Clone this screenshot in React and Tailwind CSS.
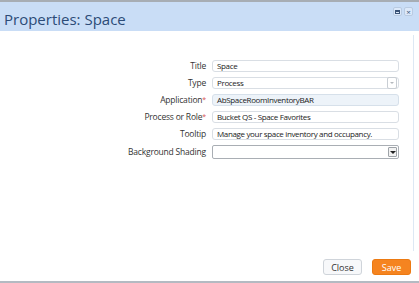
import React from 'react';

const Field = ({ value, tone = 'white', arrow }) => {
    const bg = tone === 'ro' ? 'bg-[#edf3f9] border-[#d6e0ea]' : 'bg-white border-[#d9dee4]';
    return (
        <div className={`relative h-[12px] w-[187px] rounded-[3px] border ${bg} flex items-center pl-[4px] text-[8px] leading-[10px] tracking-[-0.35px] text-[#222] whitespace-nowrap`}>
            <span>{value}</span>
            {arrow && (
                <div className="absolute right-[1px] top-[-1px] h-[12px] w-[10px] rounded-[2px] border border-[#c9ced4] bg-white flex items-center justify-center">
                    <div className="h-0 w-0 border-l-[2px] border-r-[2px] border-t-[2px] border-l-transparent border-r-transparent border-t-[#b5b9be]" />
                </div>
            )}
        </div>
    );
};

const Row = ({ label, required, children }) => (
    <div className="flex items-center">
        <div className="w-[207px] pr-[1px] text-right text-[8.5px] leading-[10px] tracking-[-0.2px] text-[#333] whitespace-nowrap">
            {label}
            {required && <span className="text-[#d9534f] text-[7px] align-top">*</span>}
        </div>
        <div className="ml-[5px]">{children}</div>
    </div>
);

export default function App() {
    return (
        <div className="w-[419px] h-[283px] flex flex-col bg-white overflow-hidden" style={{ fontFamily: '"Open Sans", "Noto Sans", sans-serif' }}>
            <div className="h-[2px] bg-[#a7adb4]" />
            <div className="h-[29px] bg-[#c9ddf6] flex items-center justify-between pl-[4px] pr-[6px]">
                <span className="text-[15px] text-[#2c4b77] leading-none mt-[5px]">Properties: Space</span>
                <div className="flex gap-[2px] -mt-[10px]">
                    <div className="h-[9px] w-[9px] rounded-[2px] bg-[#dce9fa] border border-[#b9cbe2] flex items-center justify-center">
                        <div className="h-[4px] w-[5px] border border-[#3b5478] border-t-2" />
                    </div>
                    <div className="h-[9px] w-[9px] rounded-[2px] bg-[#dce9fa] border border-[#b9cbe2] flex items-center justify-center text-[8px] leading-none text-[#3b5478]">
                        ×
                    </div>
                </div>
            </div>
            <div className="flex-1 flex">
                <div className="flex-1 flex flex-col">
                    <div className="flex flex-col gap-[5px] pt-[29px]">
                        <Row label="Title"><Field value="Space" /></Row>
                        <Row label="Type"><Field value="Process" arrow /></Row>
                        <Row label="Application" required><Field value="AbSpaceRoomInventoryBAR" tone="ro" /></Row>
                        <Row label="Process or Role" required><Field value="Bucket QS - Space Favorites" /></Row>
                        <Row label="Tooltip"><Field value="Manage your space inventory and occupancy." /></Row>
                        <Row label="Background Shading">
                            <div className="relative h-[14px] w-[187px] rounded-[2px] border border-[#a9aeb4] bg-white">
                                <div className="absolute right-[1px] top-[1px] h-[10px] w-[9px] rounded-[1px] border border-[#9ea3a8] bg-[#f2f2f2] flex items-center justify-center">
                                    <div className="h-0 w-0 border-l-[3px] border-r-[3px] border-t-[3px] border-l-transparent border-r-transparent border-t-[#222]" />
                                </div>
                            </div>
                        </Row>
                    </div>
                    <div className="mt-auto mb-[6px] flex justify-end gap-[10px] pr-[2px]">
                        <button className="h-[16px] w-[39px] rounded-[3px] border border-[#cfd4da] bg-[#f7f8fa] text-[9px] leading-none text-[#333]">Close</button>
                        <button className="h-[16px] w-[39px] rounded-[3px] border border-[#ec7a12] bg-[#f58420] text-[9px] leading-none text-white">Save</button>
                    </div>
                </div>
                <div className="w-[1px] bg-[#dde8f4] mb-[30px] mt-[4px]" />
                <div className="w-[5px]" />
            </div>
            <div className="h-[2px] bg-[#b4bac2]" />
        </div>
    );
}
